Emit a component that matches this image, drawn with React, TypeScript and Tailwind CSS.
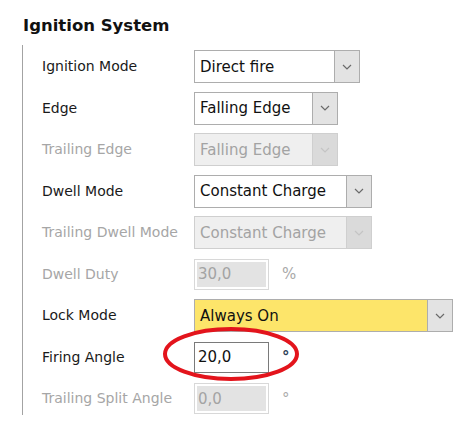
import React from "react";

const font = { fontFamily: "'DejaVu Sans', Verdana, sans-serif" };

function Chevron({ disabled }: { disabled?: boolean }) {
  return (
    <svg width="10" height="6" viewBox="0 0 10 6">
      <path
        d="M1 1 L5 5 L9 1"
        fill="none"
        stroke={disabled ? "#c4c4c4" : "#6a6a6a"}
        strokeWidth="1.2"
      />
    </svg>
  );
}

function Combo({ value, width, disabled, yellow }: { value: string; width: string; disabled?: boolean; yellow?: boolean }) {
  const box = disabled
    ? "border-[#cfcfcf] bg-[#efefef] text-[#a3a3a3]"
    : yellow
    ? "border-[#adadad] bg-[#fde56a] text-[#111]"
    : "border-[#adadad] bg-white text-[#111]";
  return (
    <div className={`flex h-[33px] border ${box} ${width}`}>
      <div className="flex-1 flex items-center pl-[5px] text-[15px] whitespace-nowrap overflow-hidden">{value}</div>
      <div
        className={`w-[25px] flex items-center justify-center border-l ${
          disabled ? "border-[#cfcfcf] bg-[#dadada]" : "border-[#adadad] bg-[#e3e3e3]"
        }`}
      >
        <Chevron disabled={disabled} />
      </div>
    </div>
  );
}

function NumBox({ value, unit, disabled }: { value: string; unit: string; disabled?: boolean }) {
  return (
    <div className="flex items-center">
      {disabled ? (
        <div className="w-[75px] h-[31px] border border-[#d8d8d8] bg-white p-[2px]">
          <div className="h-full bg-[#e3e3e3] flex items-center pl-[1px] text-[15px] text-[#a3a3a3]">{value}</div>
        </div>
      ) : (
        <div className="w-[75px] h-[31px] border border-[#7a7a7a] bg-white flex items-center pl-[3px] text-[15px] text-[#111]">
          {value}
        </div>
      )}
      <span className={`ml-[13px] text-[15px] ${disabled ? "text-[#a9a9a9]" : "text-[#2c3e55] font-bold"}`}>{unit}</span>
    </div>
  );
}

function Row({ label, disabled, children }: { label: string; disabled?: boolean; children: React.ReactNode }) {
  return (
    <div className="flex items-center h-[41.5px]">
      <div className={`w-[152px] text-[14px] whitespace-nowrap ${disabled ? "text-[#a6a6a6]" : "text-[#1a1a1a]"}`}>{label}</div>
      {children}
    </div>
  );
}

export default function App() {
  return (
    <div className="relative w-[468px] h-[433px] bg-white overflow-hidden" style={font}>
      <div className="pt-[17px] pl-[23px] text-[16.5px] leading-[17px] font-bold text-[#111]">Ignition System</div>
      <div className="ml-[22px] mt-[11px] border-l border-[#a3a3a3] pl-[19px] pt-px h-[370px]">
        <Row label="Ignition Mode">
          <Combo value="Direct fire" width="w-[166px]" />
        </Row>
        <Row label="Edge">
          <Combo value="Falling Edge" width="w-[144px]" />
        </Row>
        <Row label="Trailing Edge" disabled>
          <Combo value="Falling Edge" width="w-[144px]" disabled />
        </Row>
        <Row label="Dwell Mode">
          <Combo value="Constant Charge" width="w-[178px]" />
        </Row>
        <Row label="Trailing Dwell Mode" disabled>
          <Combo value="Constant Charge" width="w-[178px]" disabled />
        </Row>
        <Row label="Dwell Duty" disabled>
          <NumBox value="30,0" unit="%" disabled />
        </Row>
        <Row label="Lock Mode">
          <Combo value="Always On" width="w-[259px]" yellow />
        </Row>
        <Row label="Firing Angle">
          <NumBox value="20,0" unit="°" />
        </Row>
        <Row label="Trailing Split Angle" disabled>
          <NumBox value="0,0" unit="°" disabled />
        </Row>
      </div>
      <svg className="absolute left-[162px] top-[326px]" width="138" height="56" viewBox="0 0 138 56">
        <ellipse cx="69" cy="28" rx="66" ry="25" fill="none" stroke="#e3141c" strokeWidth="4" />
      </svg>
    </div>
  );
}
